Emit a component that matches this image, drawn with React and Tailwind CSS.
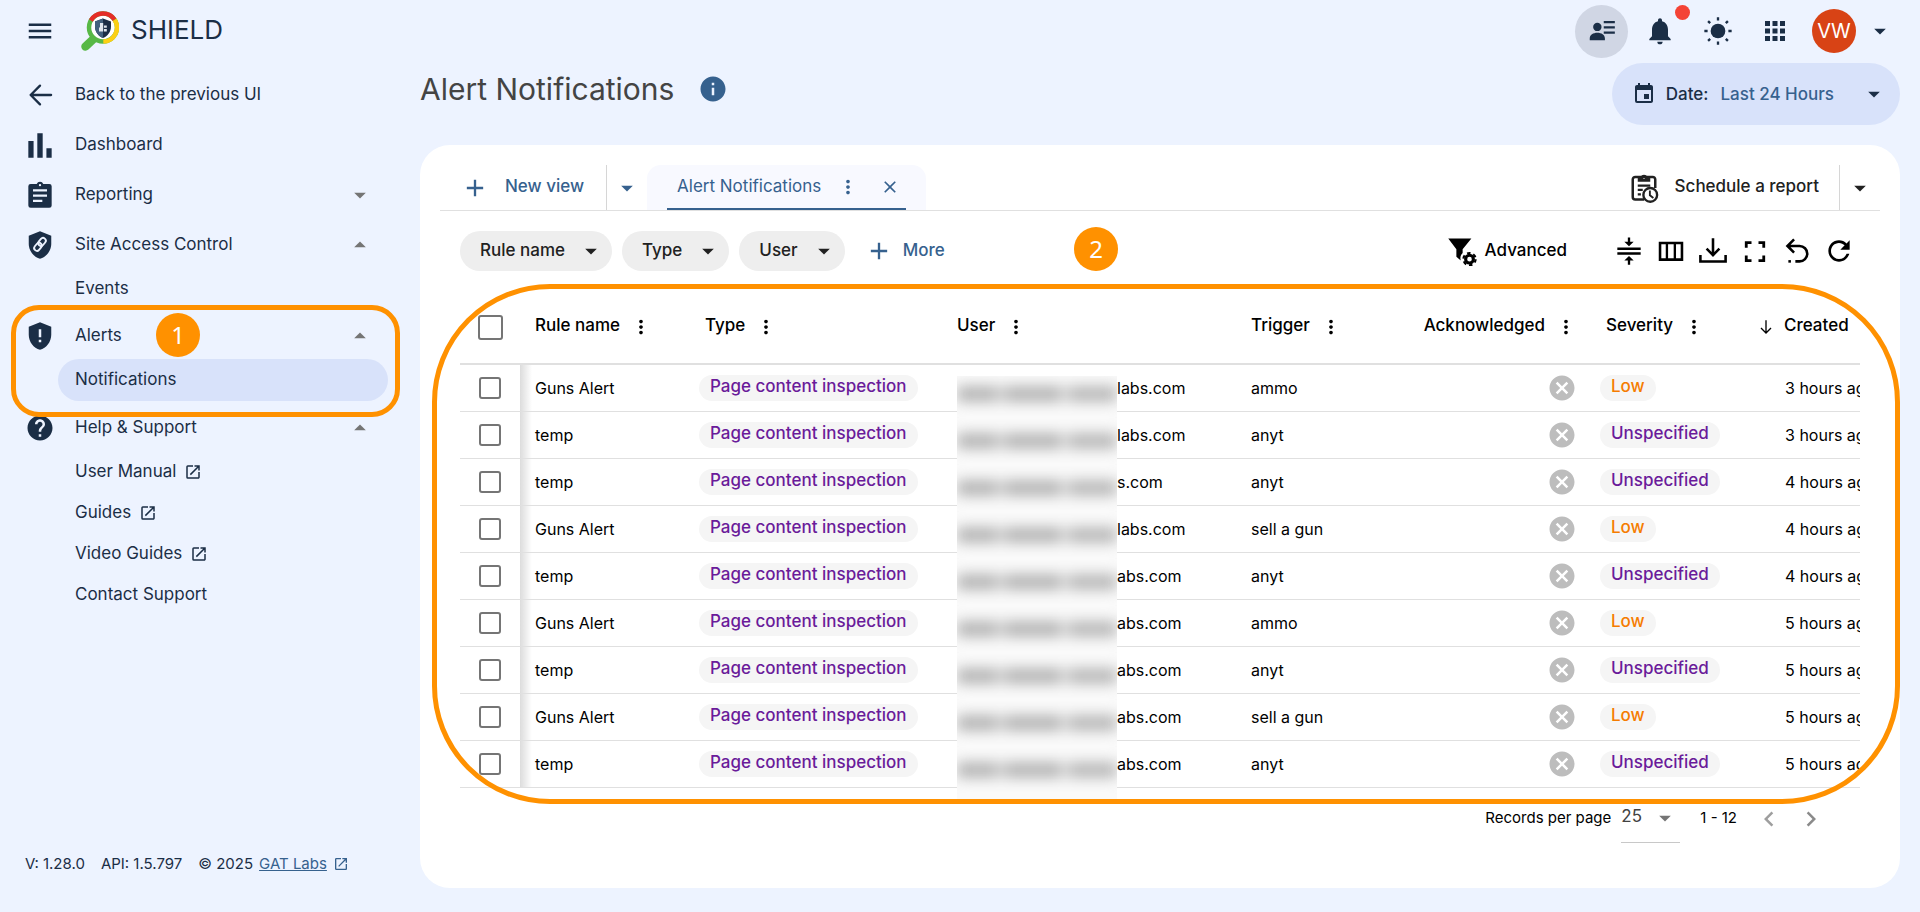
import React, { useState } from 'react';
import clsx from 'clsx';
import {
  MdAdd,
  MdApps,
  MdArrowDropDown,
  MdArrowDropUp,
  MdCancel,
  MdChevronLeft,
  MdChevronRight,
  MdClose,
  MdEvent,
  MdHelp,
  MdInfo,
  MdMenu,
  MdMoreVert,
  MdNotifications,
  MdOpenInNew,
  MdRefresh,
} from 'react-icons/md';

const alerts = [
  { id: 1, rule: 'Guns Alert', domain: 'labs.com', trigger: 'ammo', severity: 'Low', created: '3 hours ago' },
  { id: 2, rule: 'temp', domain: 'labs.com', trigger: 'anyt', severity: 'Unspecified', created: '3 hours ago' },
  { id: 3, rule: 'temp', domain: 's.com', trigger: 'anyt', severity: 'Unspecified', created: '4 hours ago' },
  { id: 4, rule: 'Guns Alert', domain: 'labs.com', trigger: 'sell a gun', severity: 'Low', created: '4 hours ago' },
  { id: 5, rule: 'temp', domain: 'abs.com', trigger: 'anyt', severity: 'Unspecified', created: '4 hours ago' },
  { id: 6, rule: 'Guns Alert', domain: 'abs.com', trigger: 'ammo', severity: 'Low', created: '5 hours ago' },
  { id: 7, rule: 'temp', domain: 'abs.com', trigger: 'anyt', severity: 'Unspecified', created: '5 hours ago' },
  { id: 8, rule: 'Guns Alert', domain: 'abs.com', trigger: 'sell a gun', severity: 'Low', created: '5 hours ago' },
  { id: 9, rule: 'temp', domain: 'abs.com', trigger: 'anyt', severity: 'Unspecified', created: '5 hours ago' },
];

const Svg = ({ size = 28, children }) => (
  <svg width={size} height={size} viewBox="0 0 24 24" fill="currentColor" aria-hidden="true">
    {children}
  </svg>
);

const Line = ({ d, width = 2, round = false }) => (
  <path
    d={d}
    fill="none"
    stroke="currentColor"
    strokeWidth={width}
    strokeLinecap={round ? 'round' : 'butt'}
    strokeLinejoin={round ? 'round' : 'miter'}
  />
);

const SHIELD = 'M12 1 3 4.6V11c0 5.55 3.84 10.74 9 12 5.16-1.26 9-6.45 9-12V4.6z';

const BackIcon = () => (
  <Svg>
    <Line d="M21.500 12H4M12 4 4 12l8 8" width={2} round />
  </Svg>
);

const BarsIcon = () => (
  <Svg>
    <path d="M2 8.500h4.500V23H2zM9.700 2h4.600v21H9.700zM17.500 14.700H22V23h-4.500z" />
  </Svg>
);

const ClipboardIcon = () => (
  <Svg>
    <path
      fillRule="evenodd"
      d="M4 2.500h5.200a3 3 0 0 1 5.600 0H20a2 2 0 0 1 2 2V21a2 2 0 0 1-2 2H4a2 2 0 0 1-2-2V4.500a2 2 0 0 1 2-2zM12 2.500a1 1 0 1 0 0 2 1 1 0 0 0 0-2zM6 7v2h12V7zm0 4.500v2h12v-2zM6 16v2h8v-2z"
    />
  </Svg>
);

const ShieldLinkIcon = () => (
  <Svg size={30}>
    <path d={SHIELD} />
    <g transform="rotate(-50 12 11.5)" fill="none" stroke="#edf3ff" strokeWidth="1.5">
      <rect x="6" y="9.3" width="7" height="4.400" rx="2.200" />
      <rect x="11" y="9.300" width="7" height="4.400" rx="2.200" />
    </g>
  </Svg>
);

const ShieldAlertIcon = () => (
  <Svg size={30}>
    <path fillRule="evenodd" d={`${SHIELD}M11 6.500v6.500h2V6.500zm0 8.500v2h2v-2z`} />
  </Svg>
);

const ContactsIcon = () => (
  <Svg>
    <circle cx="8" cy="8.5" r="3.6" />
    <path d="M1.500 20v-1.500c0-3.200 3-5 6.500-5s6.500 1.800 6.500 5V20zM13.500 3.500H23v1.800h-9.500zM13.500 8H23v1.800h-9.500zM13.500 12.500H23v1.800h-9.500z" />
  </Svg>
);

const SunIcon = () => (
  <Svg>
    <circle cx="12" cy="12" r="6.3" />
    <path d="M11 .3h2v2.800h-2zM11 20.900h2v2.800h-2zM.3 11h2.800v2H.3zM20.900 11h2.800v2h-2.800z" />
    <Line d="m3.500 3.500 1.800 1.800M20.500 3.500l-1.800 1.800M3.500 20.500l1.800-1.800M20.500 20.500l-1.800-1.800" />
  </Svg>
);

const ScheduleIcon = () => (
  <Svg size={30}>
    <Line d="M12 21.200H5A2 2 0 0 1 3 19.200V5.200A2 2 0 0 1 5 3.200h14a2 2 0 0 1 2 2V12" width={2} />
    <path fillRule="evenodd" d="M7 3.200h2.300a2.900 2.900 0 0 1 5.400 0H17v3.800H7zM12 2.600a1 1 0 1 0 0 2 1 1 0 0 0 0-2z" />
    <Line d="M7 10h10M7 13.500h4M7 17h2.500" width={1.800} />
    <circle cx="17" cy="17.500" r="5.500" fill="#fff" stroke="currentColor" strokeWidth="1.900" />
    <Line d="M16.700 14v3.800l2.800 2.200" width={1.500} />
  </Svg>
);

const FilterCogIcon = () => (
  <Svg size={30}>
    <path d="M1 2h18.500l-7 8.500v3a6 6 0 0 0-1.500 6L7.500 16.500v-6z" />
    <circle cx="18" cy="18.500" r="3.100" fill="none" stroke="currentColor" strokeWidth="2.500" />
    <circle cx="18" cy="18.500" r="4.900" fill="none" stroke="currentColor" strokeWidth="1.700" strokeDasharray="2.800 2.331" />
  </Svg>
);

const CompressIcon = () => (
  <Svg>
    <path d="M2 9h20v2.200H2zM2 13h20v2.200H2zM8 4h3V.500h2V4h3l-4 4zM8 20.200h3v3.500h2v-3.500h3l-4-4z" />
  </Svg>
);

const ColumnsIcon = () => (
  <Svg>
    <path fillRule="evenodd" d="M1.500 4h21v16.500h-21zM3.700 6.200v12h3.800v-12zm5.800 0v12h4.800v-12zm6.800 0v12h4v-12z" />
  </Svg>
);

const DownloadIcon = () => (
  <Svg>
    <Line d="M12 1v14M6.500 10l5.500 5.500 5.500-5.500M1.200 15.500V21h21.600v-5.500" width={2.200} />
  </Svg>
);

const FullscreenIcon = () => (
  <Svg>
    <Line d="M9 4.800H4.500V9.200M15 4.800h4.500v4.400M9 20.200H4.500v-4.400M15 20.200h4.500v-4.400" width={2.400} />
  </Svg>
);

const UndoIcon = () => (
  <Svg>
    <Line d="M9.500 2 3.800 7.700l5.700 5.700M3.800 7.700h10.400a6.600 6.600 0 0 1 0 13.200h-3.600" width={2.200} />
    <path d="M4.600 19.800h2.200V22H4.600z" />
  </Svg>
);

const ArrowDownIcon = () => (
  <Svg size={16}>
    <Line d="M12 2v19M4.500 13.500 12 21l7.500-7.500" />
  </Svg>
);

const Logo = () => (
  <svg width="38" height="40" viewBox="0 0 38 40" fill="none" aria-hidden="true">
    <path d="M13 27.500 4.500 35.500" stroke="#57b846" strokeWidth="8.500" strokeLinecap="round" />
    <circle cx="22" cy="16.500" r="14" fill="#fff" stroke="#57b846" strokeWidth="4.500" />
    <path d="M9.900 9.500A14 14 0 0 1 33.600 8.700" stroke="#e52d27" strokeWidth="4.500" />
    <path d="M33.600 8.700A14 14 0 0 1 22.300 30.500" stroke="#fccf14" strokeWidth="4.500" />
    <path d="m22 7.500 8 3v5c0 5.500-3.400 9.600-8 11.500-4.600-1.900-8-6-8-11.500v-5z" fill="#1b2e46" />
    <path d="m22 7.500-8 3v5c0 5.500 3.400 9.600 8 11.500z" fill="#42607d" />
    <path d="M19 12h3.200v8.500H19zM18 16.500h1v4h-1zM23 14.500h2.800v2.300H23zM23 18h2.800v2.500H23z" fill="#dfe6ee" />
  </svg>
);

const Badge = ({ className, children }) => (
  <span
    className={clsx(
      'absolute z-20 flex size-11 items-center justify-center rounded-full bg-[#ff9100] font-["Noto_Sans",sans-serif] text-2xl text-white',
      className
    )}
  >
    {children}
  </span>
);

const NavItem = ({ icon, label, caret }) => (
  <button type="button" className="flex h-[46px] w-full items-center text-left">
    <span className="flex w-20 shrink-0 justify-center">{icon}</span>
    <span className="-ml-[5px] flex-1 pb-0.5">{label}</span>
    {caret === 'down' && <MdArrowDropDown size={28} className="mr-[46px] text-[#757575]" />}
    {caret === 'up' && <MdArrowDropUp size={28} className="mr-[46px] text-[#757575]" />}
  </button>
);

const SubItem = ({ label, active, external }) => (
  <a
    href="#"
    className={clsx(
      'ml-[58px] mr-8 flex items-center gap-2 rounded-full pl-[17px]',
      active ? 'h-[42px] bg-[#d8e2fa]' : 'h-[41px]'
    )}
  >
    <span className="pb-0.5">{label}</span>
    {external && <MdOpenInNew size={18} />}
  </a>
);

const Sidebar = () => (
  <aside className="flex w-[420px] shrink-0 flex-col pt-2.5">
    <nav className="flex flex-col gap-1">
      <NavItem icon={<BackIcon />} label="Back to the previous UI" />
      <NavItem icon={<BarsIcon />} label="Dashboard" />
      <NavItem icon={<ClipboardIcon />} label="Reporting" caret="down" />
      <div>
        <NavItem icon={<ShieldLinkIcon />} label="Site Access Control" caret="up" />
        <SubItem label="Events" />
      </div>
      <div className="relative">
        <NavItem icon={<ShieldAlertIcon />} label="Alerts" caret="up" />
        <SubItem label="Notifications" active />
        {/* Callout around the alerts section */}
        <div className="pointer-events-none absolute -bottom-4 -top-2 left-[11px] right-5 z-10 rounded-[28px] border-[5px] border-[#ff9100]" />
        <Badge className="left-[156px] top-0">1</Badge>
      </div>
      <div>
        <NavItem icon={<MdHelp size={30} />} label="Help & Support" caret="up" />
        <SubItem label="User Manual" external />
        <SubItem label="Guides" external />
        <SubItem label="Video Guides" external />
        <SubItem label="Contact Support" />
      </div>
    </nav>
    <footer className="mt-auto flex items-center gap-4 pb-9 pl-[25px] text-[15px]">
      <span>V: 1.28.0</span>
      <span>API: 1.5.797</span>
      <span className="flex items-center gap-1.5">
        © 2025
        <a href="#" className="flex items-center gap-1.5 text-[#36618e]">
          <span className="underline">GAT Labs</span>
          <MdOpenInNew size={16} />
        </a>
      </span>
    </footer>
  </aside>
);

const Header = () => (
  <header className="flex h-[62px] items-center pl-[25px] pr-[26px]">
    <button type="button" aria-label="Menu">
      <MdMenu size={30} />
    </button>
    <div className="ml-[26px] flex items-center gap-3">
      <Logo />
      <span className="pb-0.5 text-[26px]">SHIELD</span>
    </div>
    <div className="ml-auto flex items-center">
      <button type="button" aria-label="Contacts" className="flex size-[53px] items-center justify-center rounded-full bg-[#d0d6e4]">
        <ContactsIcon />
      </button>
      <button type="button" aria-label="Notifications" className="relative ml-4">
        <MdNotifications size={32} />
        <span className="absolute -right-3.5 -top-2.5 size-[15px] rounded-full bg-[#f44336]" />
      </button>
      <button type="button" aria-label="Theme" className="ml-7">
        <SunIcon />
      </button>
      <button type="button" aria-label="Apps" className="ml-7">
        <MdApps size={30} />
      </button>
      <button type="button" className="ml-[22px] flex items-center gap-2.5">
        <span className="flex size-11 items-center justify-center rounded-full bg-[#d84315] text-xl text-white">VW</span>
        <MdArrowDropDown size={28} />
      </button>
    </div>
  </header>
);

const FilterChip = ({ label }) => (
  <button type="button" className="flex h-10 items-center gap-3 rounded-full bg-[#eee] pl-5 pr-[7px] font-medium text-[#212121]">
    <span className="pb-0.5">{label}</span>
    <MdArrowDropDown size={28} />
  </button>
);

const Tabs = () => (
  <div className="flex h-[46px] border-b border-[#e0e0e0] text-[#36618e]">
    <button type="button" className="flex items-center gap-4 pl-[21px] pr-[22px] font-medium">
      <MdAdd size={28} />
      <span className="pb-1">New view</span>
    </button>
    <button type="button" aria-label="More views" className="flex items-center border-l border-[#d6d6d6] px-1.5">
      <MdArrowDropDown size={28} />
    </button>
    <div className="rounded-t-[14px] bg-[#f8f9ff] px-5">
      <div className="flex h-full items-center border-b-2 border-[#36618e] pl-2.5">
        <button type="button" className="pb-0.5">Alert Notifications</button>
        <button type="button" aria-label="View options" className="ml-4">
          <MdMoreVert size={22} />
        </button>
        <button type="button" aria-label="Close view" className="ml-[21px] pr-1.5">
          <MdClose size={20} />
        </button>
      </div>
    </div>
    <button type="button" className="ml-auto flex items-center gap-4 pr-5 font-medium text-[#212121]">
      <ScheduleIcon />
      <span className="pb-1">Schedule a report</span>
    </button>
    <button type="button" aria-label="Report options" className="flex items-center border-l border-[#d6d6d6] px-1.5 text-[#212121]">
      <MdArrowDropDown size={28} />
    </button>
  </div>
);

const Toolbar = () => {
  const tools = [
    { label: 'Density', icon: <CompressIcon /> },
    { label: 'Columns', icon: <ColumnsIcon /> },
    { label: 'Download', icon: <DownloadIcon /> },
    { label: 'Fullscreen', icon: <FullscreenIcon /> },
    { label: 'Undo', icon: <UndoIcon /> },
    { label: 'Refresh', icon: <MdRefresh size={32} /> },
  ];

  return (
    <div className="relative flex items-center gap-2.5 px-5 pt-5">
      <FilterChip label="Rule name" />
      <FilterChip label="Type" />
      <FilterChip label="User" />
      <button type="button" className="ml-2.5 flex items-center gap-2.5 font-medium text-[#36618e]">
        <MdAdd size={28} />
        <span className="pb-0.5">More</span>
      </button>
      <Badge className="left-[634px] top-4">2</Badge>
      <button type="button" className="ml-auto flex items-center gap-2 font-medium text-black">
        <FilterCogIcon />
        <span className="pb-0.5">Advanced</span>
      </button>
      <div className="ml-[31px] flex text-black">
        {tools.map((tool) => (
          <button key={tool.label} type="button" aria-label={tool.label} className="flex h-10 w-[42px] items-center justify-center">
            {tool.icon}
          </button>
        ))}
      </div>
    </div>
  );
};

const ColumnHead = ({ label, className }) => (
  <th scope="col" className="pl-[15px] text-left font-medium">
    <span className={clsx('flex items-center gap-2.5', className)}>
      <span className="pb-1">{label}</span>
      <button type="button" aria-label={`${label} options`}>
        <MdMoreVert size={22} />
      </button>
    </span>
  </th>
);

const AlertsTable = () => (
  <div className="relative mx-5 mt-5">
    <div className="overflow-hidden">
      <table className="w-full min-w-[1480px] table-fixed border-collapse text-black">
        <colgroup>
          <col className="w-[60px]" />
          <col className="w-[170px]" />
          <col className="w-[252px]" />
          <col className="w-[294px]" />
          <col className="w-[169px]" />
          <col className="w-[186px]" />
          <col className="w-[149px]" />
          <col />
        </colgroup>
        <thead>
          <tr className="h-[73px] border-b-2 border-[#e0e0e0]">
            <th scope="col" className="pl-[18px] text-left">
              <input type="checkbox" aria-label="Select all" className="block size-[25px] appearance-none rounded-[3px] border-2 border-[#757575]" />
            </th>
            <ColumnHead label="Rule name" />
            <ColumnHead label="Type" />
            <ColumnHead label="User" />
            <ColumnHead label="Trigger" />
            <ColumnHead label="Acknowledged" className="justify-end pr-3.5" />
            <ColumnHead label="Severity" />
            <th scope="col" className="pl-[18px] text-left font-medium">
              <button type="button" className="flex items-center gap-2.5">
                <ArrowDownIcon />
                <span className="pb-1">Created</span>
              </button>
            </th>
          </tr>
        </thead>
        <tbody className="text-base">
          {alerts.map((alert) => (
            <tr key={alert.id} className="h-[47px] border-b border-[#e0e0e0]">
              <td className="pl-[19px]">
                <input
                  type="checkbox"
                  aria-label={`Select ${alert.rule} ${alert.id}`}
                  className="block size-[22px] appearance-none rounded-[3px] border-2 border-[#757575]"
                />
              </td>
              <td className="bg-linear-to-r from-[#dcdcdc] to-white to-[12px] pl-[15px]">{alert.rule}</td>
              <td className="pl-[9px]">
                <span className="inline-flex h-[26px] items-center rounded-full bg-[#f5f5f5] px-[11px] pb-0.5 text-[17px] font-medium text-[#6a1b9a]">
                  Page content inspection
                </span>
              </td>
              <td className="pl-[175px]">{alert.domain}</td>
              <td className="pl-[15px]">{alert.trigger}</td>
              <td className="pr-3.5">
                <MdCancel size={30} className="ml-auto text-[#bdbdbd]" />
              </td>
              <td className="pl-[9px]">
                <span
                  className={clsx(
                    'inline-flex h-[26px] items-center rounded-full bg-[#f5f5f5] px-[11px] pb-0.5 text-[17px] font-medium',
                    alert.severity === 'Low' ? 'text-[#f57c00]' : 'text-[#6a1b9a]'
                  )}
                >
                  {alert.severity}
                </span>
              </td>
              <td className="whitespace-nowrap pl-[45px]">{alert.created}</td>
            </tr>
          ))}
        </tbody>
      </table>
    </div>

    {/* Redacted part of the user addresses */}
    <div className="absolute left-[497px] top-[85px] w-40 overflow-hidden bg-[#fafafa]">
      {alerts.map((alert) => (
        <div key={alert.id} className="flex h-[47px] items-start pt-2.5 blur-[7px]">
          <span className="h-4 w-10 shrink-0 bg-[#b4b4b4]" />
          <span className="h-4 w-2 shrink-0 bg-[#d8d8d8]" />
          <span className="h-4 w-14 shrink-0 bg-[#b4b4b4]" />
          <span className="h-4 w-2 shrink-0 bg-[#e0e0e0]" />
          <span className="h-4 w-12 shrink-0 bg-[#b8b8b8]" />
        </div>
      ))}
    </div>

    {/* Callout around the table */}
    <div className="pointer-events-none absolute -bottom-4 -left-7 -right-10 -top-[7px] z-10 rounded-[118px] border-[5px] border-[#ff9100]" />
  </div>
);

const Pagination = () => {
  const [pageSize, setPageSize] = useState('25');

  return (
    <div className="flex items-start justify-end pr-[54px] text-[15px] text-black">
      <label htmlFor="page-size" className="pt-[18px]">Records per page</label>
      <div className="ml-2.5 flex h-[55px] w-[59px] items-start border-b border-[#c8c8c8] pt-4 text-[#424242]">
        <select
          id="page-size"
          value={pageSize}
          onChange={(e) => setPageSize(e.target.value)}
          className="w-[30px] appearance-none text-[17px]"
        >
          <option>25</option>
          <option>50</option>
          <option>100</option>
        </select>
        <MdArrowDropDown size={28} className="shrink-0 text-[#757575]" />
      </div>
      <span className="ml-5 pt-[18px]">1 - 12</span>
      <button type="button" aria-label="Previous page" className="ml-[17px] pt-4 text-[#9e9e9e]">
        <MdChevronLeft size={30} />
      </button>
      <button type="button" aria-label="Next page" className="ml-3 pt-4 text-[#8a8a8a]">
        <MdChevronRight size={30} />
      </button>
    </div>
  );
};

const App = () => {
  return (
    <div className='flex min-h-screen flex-col bg-[#edf3ff] font-["Inter",sans-serif] text-[17px] leading-6 text-[#1b2e46]'>
      <Header />
      <div className="flex flex-1">
        <Sidebar />
        <main className="flex min-w-0 flex-1 flex-col pb-6 pr-5">
          <div className="flex h-[83px] items-start justify-between">
            <h1 className="flex items-center gap-6 text-[30px] leading-[54px] text-[#444]">
              Alert Notifications
              <MdInfo size={30} className="text-[#36618e]" />
            </h1>
            <button type="button" className="mt-px flex h-[62px] items-center rounded-full bg-[#d8e2fa] pl-5 pr-3">
              <MdEvent size={24} />
              <span className="ml-2.5 font-medium">Date:</span>
              <span className="ml-3 font-medium text-[#36618e]">Last 24 Hours</span>
              <MdArrowDropDown size={28} className="ml-[26px]" />
            </button>
          </div>
          <section className="flex-1 rounded-[30px] bg-white px-5 pt-5">
            <Tabs />
            <Toolbar />
            <AlertsTable />
            <Pagination />
          </section>
        </main>
      </div>
    </div>
  );
};

export default App;
